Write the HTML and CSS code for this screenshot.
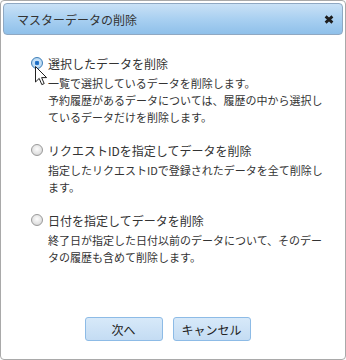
FILE: index.html
```html
<!DOCTYPE html>
<html lang="ja">
<head>
  <meta charset="UTF-8">
  <meta name="viewport" content="width=device-width, initial-scale=1.0">
  <title>マスターデータの削除</title>
  <link rel="stylesheet" href="styles.css">
</head>
<body>
  <div class="dialog">
    <div class="titlebar">
      <span class="title">マスターデータの削除</span>
      <span class="close" title="閉じる">
        <svg width="10" height="9" viewBox="0 0 10 9">
          <path d="M1.6 1.4 L8.4 7.6 M8.4 1.4 L1.6 7.6" stroke="#1e1e1e" stroke-width="2.8"/>
        </svg>
      </span>
    </div>

    <div class="options">
      <div class="option">
        <label class="option-label">
          <input type="radio" name="mode" checked>
          <span>選択したデータを削除</span>
        </label>
        <p class="desc">一覧で選択しているデータを削除します。<br>予約履歴があるデータについては、履歴の中から選択しているデータだけを削除します。</p>
        <!-- mouse pointer over the first radio -->
        <svg class="cursor" width="13" height="20" viewBox="0 0 13 20">
          <path d="M0.5 0.5 L0.5 16 L4.2 12.4 L6.8 18.6 L9.2 17.6 L6.6 11.6 L11.6 11.6 Z" fill="#fff" stroke="#222" stroke-width="1" stroke-linejoin="miter"/>
        </svg>
      </div>

      <div class="option">
        <label class="option-label">
          <input type="radio" name="mode">
          <span>リクエストIDを指定してデータを削除</span>
        </label>
        <p class="desc">指定したリクエストIDで登録されたデータを全て削除します。</p>
      </div>

      <div class="option">
        <label class="option-label">
          <input type="radio" name="mode">
          <span>日付を指定してデータを削除</span>
        </label>
        <p class="desc">終了日が指定した日付以前のデータについて、そのデータの履歴も含めて削除します。</p>
      </div>
    </div>

    <div class="buttons">
      <button class="btn">次へ</button>
      <button class="btn">キャンセル</button>
    </div>
  </div>
</body>
</html>
```

FILE: styles.css
```css
body {
  margin: 0;
  padding: 0;
  background: #fff;
  font-family: "Noto Sans CJK JP", "Noto Sans", sans-serif;
  color: #333;
}

.dialog {
  box-sizing: border-box;
  width: 346px;
  height: 360px;
  border: 1px solid #a9a9a9;
  border-radius: 4px;
  padding: 2px;
  display: flex;
  flex-direction: column;
  background: #fff;
}

.titlebar {
  height: 30px;
  border: 1px solid #8fa8c2;
  border-radius: 4px;
  background: linear-gradient(to bottom, #c9e1f6 0%, #a9d0f1 50%, #8fc0ea 100%);
  display: flex;
  align-items: center;
  justify-content: space-between;
  padding: 0 8px 0 13px;
}

.title {
  font-size: 12px;
  color: #333;
}

.close {
  display: flex;
  margin-top: 1px;
  cursor: pointer;
}

.options {
  padding: 18px 0 0 28px;
}

.option {
  position: relative;
  margin-bottom: 14px;
}

.option-label {
  display: flex;
  align-items: center;
  height: 20px;
  font-size: 12px;
  cursor: pointer;
}

.option-label input {
  appearance: none;
  -webkit-appearance: none;
  width: 12px;
  height: 12px;
  margin: 0 5px 0 0;
  border: 1px solid #9a9a9a;
  border-radius: 50%;
  box-sizing: border-box;
  background: radial-gradient(circle at 50% 40%, #fdfdfd 0%, #e2e2e2 60%, #c8c8c8 100%);
}

.option-label input:checked {
  border-color: #3f7fb8;
  background: radial-gradient(circle, #1c64b8 0, #2a7cd0 2px, #cfe6f8 2.6px, #9cc8ec 100%);
}

.desc {
  margin: 2px 0 0;
  padding-left: 17px;
  width: 277px;
  font-size: 11px;
  line-height: 17px;
}

.cursor {
  position: absolute;
  left: 4px;
  top: 13px;
}

.buttons {
  margin-top: auto;
  display: flex;
  justify-content: center;
  gap: 10px;
  padding: 0 11px 16px 0;
}

.btn {
  width: 78px;
  height: 24px;
  padding: 0;
  border: 1px solid #8dbbe6;
  border-radius: 3px;
  background: linear-gradient(to bottom, #d7e9f9 0%, #c4dcf3 100%);
  font-family: inherit;
  font-size: 12px;
  color: #222;
  cursor: pointer;
}

.btn:hover {
  background: linear-gradient(to bottom, #e3f0fb 0%, #cde2f6 100%);
}
```
